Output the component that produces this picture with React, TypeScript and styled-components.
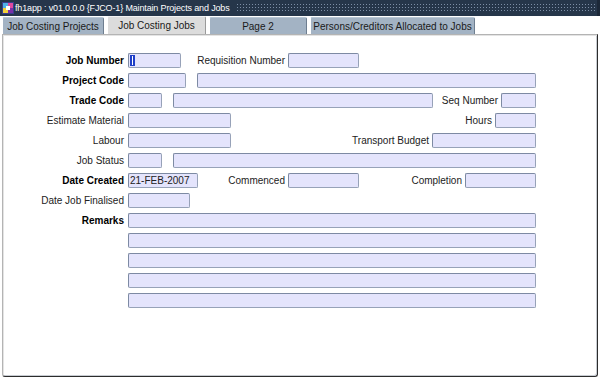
import React from 'react';
import styled, { createGlobalStyle } from 'styled-components';

const GlobalStyle = createGlobalStyle`
  html, body {
    margin: 0;
    padding: 0;
    background: #ffffff;
  }
  body {
    font-family: "Liberation Sans", Arial, sans-serif;
    font-size: 10px;
    color: #000000;
  }
`;

const Window = styled.div`
  width: 600px;
  height: 379px;
  display: flex;
  flex-direction: column;
  background: #ffffff;
  overflow: hidden;
`;

const TitleBar = styled.div`
  height: 16px;
  display: flex;
  align-items: center;
  background: #26364a;
  padding-left: 2px;
  box-sizing: border-box;
  border-right: 3px solid #1c2838;
`;

const AppIcon = styled.svg`
  width: 12px;
  height: 12px;
  flex: none;
`;

const TitleText = styled.span`
  color: #ffffff;
  font-size: 9px;
  letter-spacing: -0.15px;
  white-space: nowrap;
  margin-left: 1px;
  padding-right: 6px;
`;

const Dots = styled.div`
  flex: 1;
  height: 10px;
  margin-right: 2px;
  background-image: radial-gradient(circle, #7d8ea6 0.7px, transparent 0.9px);
  background-size: 3px 3px;
`;

const TabBar = styled.div`
  height: 18px;
  display: flex;
  align-items: flex-end;
  gap: 3px;
  padding-left: 2px;
`;

const Tab = styled.div<{ $active?: boolean; $w: number }>`
  width: ${(p) => p.$w}px;
  height: ${(p) => (p.$active ? 18 : 17)}px;
  box-sizing: border-box;
  display: flex;
  align-items: center;
  justify-content: center;
  background: ${(p) => (p.$active ? '#dcdcdc' : '#a3b3c4')};
  border-top: 1px solid ${(p) => (p.$active ? '#f4f4f4' : '#b8c6d4')};
  border-left: 1px solid #ffffff;
  border-right: 1px solid ${(p) => (p.$active ? '#9a9a9a' : '#6e7e90')};
  border-radius: 2px 2px 0 0;
  color: #1a1a1a;
  font-size: 10px;
  white-space: nowrap;
`;

const Panel = styled.div`
  flex: 1;
  margin: 0 2px 2px 2px;
  box-sizing: border-box;
  border: 1px solid #b4b4b4;
  border-right-color: #2c2c2c;
  border-bottom-color: #2c2c2c;
  border-radius: 0 0 3px 3px;
  box-shadow: inset 1px 1px 0 #e4e4e4, inset -1px -1px 0 #c8ccd2;
  display: flex;
  flex-direction: column;
  gap: 5px;
  padding-top: 18px;
`;

const Row = styled.div`
  height: 15px;
  display: flex;
  align-items: center;
`;

const Label = styled.span<{ $bold?: boolean }>`
  width: 125px;
  flex: none;
  box-sizing: border-box;
  padding-right: 4px;
  text-align: right;
  font-weight: ${(p) => (p.$bold ? 700 : 400)};
  color: ${(p) => (p.$bold ? '#000000' : '#222222')};
  white-space: nowrap;
`;

const Caption = styled.span<{ $w: number }>`
  width: ${(p) => p.$w}px;
  flex: none;
  box-sizing: border-box;
  padding-right: 3px;
  text-align: right;
  color: #222222;
  white-space: nowrap;
`;

const Field = styled.div<{ $w: number }>`
  width: ${(p) => p.$w}px;
  height: 15px;
  flex: none;
  box-sizing: border-box;
  background: #e4e4fc;
  border: 1px solid #97a2b8;
  border-top-color: #7d8aa3;
  border-left-color: #7d8aa3;
  border-radius: 2px;
  display: flex;
  align-items: center;
  padding-left: 1px;
  font-size: 10px;
  color: #222222;
  white-space: nowrap;
  overflow: hidden;
`;

const Caret = styled.span`
  width: 5px;
  height: 11px;
  background: #1f3fc8;
  display: flex;
  align-items: center;
  justify-content: center;

  &::after {
    content: '';
    width: 1px;
    height: 9px;
    background: #ffffff;
  }
`;

const remarkRows = [0, 1, 2, 3];

const App: React.FC = () => {
  return (
    <>
      <GlobalStyle />
      <Window>
        <TitleBar>
          <AppIcon viewBox="0 0 12 12">
            <rect x="0" y="0" width="12" height="12" fill="#3a3f8c" />
            <rect x="1" y="1" width="5" height="5" fill="#4fb3e8" />
            <rect x="6" y="1" width="5" height="5" fill="#e04aa0" />
            <rect x="1" y="6" width="5" height="5" fill="#f2d23a" />
            <rect x="6" y="6" width="5" height="5" fill="#7a2fa8" />
            <rect x="4" y="4" width="4" height="4" fill="#ffffff" />
          </AppIcon>
          <TitleText>fh1app : v01.0.0.0 {'{FJCO-1}'} Maintain Projects and Jobs</TitleText>
          <Dots />
        </TitleBar>

        <TabBar>
          <Tab $w={102}>Job Costing Projects</Tab>
          <Tab $w={99} $active>
            Job Costing Jobs
          </Tab>
          <Tab $w={98}>Page 2</Tab>
          <Tab $w={165}>Persons/Creditors Allocated to Jobs</Tab>
        </TabBar>

        <Panel>
          <Row>
            <Label $bold>Job Number</Label>
            <Field $w={53}>
              <Caret />
            </Field>
            <Caption $w={107}>Requisition Number</Caption>
            <Field $w={71} />
          </Row>
          <Row>
            <Label $bold>Project Code</Label>
            <Field $w={58} />
            <Caption $w={11} />
            <Field $w={339} />
          </Row>
          <Row>
            <Label $bold>Trade Code</Label>
            <Field $w={34} />
            <Caption $w={11} />
            <Field $w={260} />
            <Caption $w={68}>Seq Number</Caption>
            <Field $w={35} />
          </Row>
          <Row>
            <Label>Estimate Material</Label>
            <Field $w={103} />
            <Caption $w={264}>Hours</Caption>
            <Field $w={41} />
          </Row>
          <Row>
            <Label>Labour</Label>
            <Field $w={103} />
            <Caption $w={201}>Transport Budget</Caption>
            <Field $w={104} />
          </Row>
          <Row>
            <Label>Job Status</Label>
            <Field $w={34} />
            <Caption $w={11} />
            <Field $w={363} />
          </Row>
          <Row>
            <Label $bold>Date Created</Label>
            <Field $w={70}>21-FEB-2007</Field>
            <Caption $w={90}>Commenced</Caption>
            <Field $w={71} />
            <Caption $w={106}>Completion</Caption>
            <Field $w={71} />
          </Row>
          <Row>
            <Label>Date Job Finalised</Label>
            <Field $w={62} />
          </Row>
          <Row>
            <Label $bold>Remarks</Label>
            <Field $w={408} />
          </Row>
          {remarkRows.map((i) => (
            <Row key={i}>
              <Label />
              <Field $w={408} />
            </Row>
          ))}
        </Panel>
      </Window>
    </>
  );
};

export default App;
